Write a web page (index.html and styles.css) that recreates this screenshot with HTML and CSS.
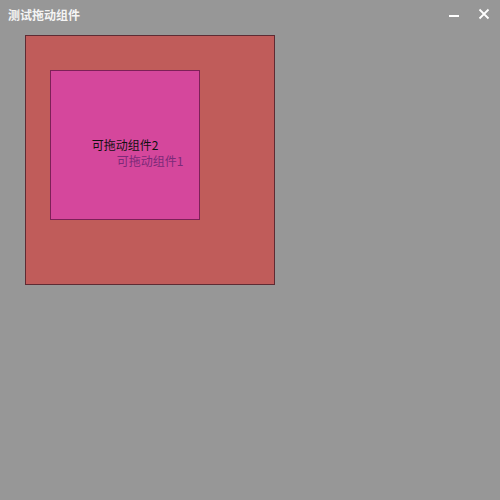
FILE: index.html
```html
<!DOCTYPE html>
<html>
<head>
<meta charset="utf-8">
<link rel="stylesheet" href="styles.css">
</head>
<body>
<div class="window">
  <div class="titlebar">
    <span class="title">测试拖动组件</span>
    <div class="controls">
      <svg class="ctl" width="12" height="12" viewBox="0 0 12 12"><rect x="1" y="7" width="10" height="2" fill="#ffffff"/></svg>
      <svg class="ctl" width="12" height="12" viewBox="0 0 12 12"><path d="M1.5 1.5 L10.5 10.5 M10.5 1.5 L1.5 10.5" stroke="#ffffff" stroke-width="1.8"/></svg>
    </div>
  </div>
  <div class="canvas">
    <div class="outer">
      <div class="inner"><span class="label2">可拖动组件2</span></div>
      <span class="label1">可拖动组件1</span>
    </div>
  </div>
</div>
</body>
</html>
```
FILE: styles.css
```css
html, body {
  margin: 0;
  padding: 0;
  width: 500px;
  height: 500px;
  background: #979797;
  overflow: hidden;
}
.window {
  font-family: "Noto Sans CJK SC", "Microsoft YaHei", sans-serif;
  width: 500px;
  height: 500px;
}
.titlebar {
  height: 30px;
  display: flex;
  align-items: center;
  justify-content: space-between;
  padding: 0 10px 0 8px;
}
.title {
  color: #f4f4f4;
  font-size: 12px;
  font-weight: bold;
  line-height: 16px;
  margin-top: -1px;
}
.controls {
  display: flex;
  gap: 18px;
  align-items: center;
  margin-top: -2px;
}
.ctl { display: block; }
.canvas {
  padding: 5px 0 0 25px;
}
.outer {
  position: relative;
  width: 248px;
  height: 248px;
  border: 1px solid #5e2b33;
  background: #c05c5a;
}
.inner {
  position: absolute;
  left: 24px;
  top: 34px;
  width: 148px;
  height: 148px;
  border: 1px solid #7d2058;
  background: #d5479c;
  display: flex;
  align-items: center;
  justify-content: center;
}
.label2 {
  font-size: 12px;
  line-height: 16px;
  color: #111111;
}
.label1 {
  position: absolute;
  left: 0;
  right: 0;
  top: 117px;
  text-align: center;
  font-size: 12px;
  line-height: 16px;
  color: #7b2a78;
}
```
